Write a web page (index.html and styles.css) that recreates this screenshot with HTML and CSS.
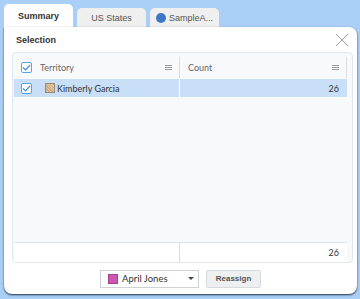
FILE: index.html
```html
<!DOCTYPE html>
<html>
<head>
<meta charset="utf-8">
<link rel="stylesheet" href="styles.css">
</head>
<body>
<div class="app">
  <div class="tabs">
    <div class="tab active">Summary</div>
    <div class="tab">US States</div>
    <div class="tab"><span class="dot"></span>SampleA...</div>
  </div>
  <div class="panel">
    <div class="head">
      <span class="title">Selection</span>
      <svg class="close" width="14" height="14" viewBox="0 0 14 14"><path d="M1 1L13 13M13 1L1 13" stroke="#9aa0a6" stroke-width="1" fill="none"/></svg>
    </div>
    <div class="grid">
      <div class="row hdr">
        <div class="cell c1">
          <span class="cb"><svg width="9" height="7" viewBox="0 0 9 7"><path d="M1 3.5L3.5 6L8 1" stroke="#3b8ee8" stroke-width="1.2" fill="none"/></svg></span>
          <span class="lbl">Territory</span>
          <span class="menu"></span>
        </div>
        <div class="cell c2"><span class="lbl">Count</span><span class="menu"></span></div>
      </div>
      <div class="row sel">
        <div class="cell c1">
          <span class="cb"><svg width="9" height="7" viewBox="0 0 9 7"><path d="M1 3.5L3.5 6L8 1" stroke="#3b8ee8" stroke-width="1.2" fill="none"/></svg></span>
          <span class="sw tan"></span>
          <span class="name">Kimberly Garcia</span>
        </div>
        <div class="cell c2 num">26</div>
      </div>
      <div class="spacer"></div>
      <div class="row foot">
        <div class="cell c1"></div>
        <div class="cell c2 num">26</div>
      </div>
    </div>
    <div class="actions">
      <div class="select"><span class="sw pink"></span><span class="opt">April Jones</span><span class="caret"></span></div>
      <div class="btn">Reassign</div>
    </div>
  </div>
</div>
</body>
</html>
```
FILE: styles.css
```css
* { box-sizing: border-box; }
html, body { margin: 0; padding: 0; }
body { width: 360px; height: 299px; overflow: hidden; background: #a9cff7; font-family: "Liberation Sans", Arial, sans-serif; }
.app { width: 360px; height: 299px; display: flex; flex-direction: column; }
.tabs { display: flex; align-items: flex-end; gap: 4px; padding: 4px 0 0 4px; height: 27px; }
.tab { width: 69px; height: 19px; background: #efefef; border-radius: 5px 5px 0 0; font-size: 9px; color: #555; display: flex; align-items: center; justify-content: center; }
.tab.active { height: 23px; background: #fff; font-weight: bold; color: #333; }
.dot { width: 10px; height: 10px; border-radius: 50%; background: #3c78c3; margin-right: 3px; }
.panel { margin-left: 4px; width: 353px; height: 267px; background: #fff; border-radius: 0 8px 8px 8px; box-shadow: 0 1px 2px rgba(20,30,50,.9); display: flex; flex-direction: column; }
.head { height: 25px; display: flex; align-items: center; justify-content: space-between; padding: 0 8px 0 12px; }
.title { font-size: 9px; font-weight: bold; color: #333; }
.grid { margin: 0 4px 0 8px; height: 211px; border: 1px solid #e3e6ea; border-radius: 4px; background: #f8f9fb; padding: 4px 5px 0 1px; display: flex; flex-direction: column; }
.row { display: flex; height: 20px; }
.cell { display: flex; align-items: center; font-family: Lato, "Open Sans", sans-serif; font-size: 9px; color: #333; }
.c1 { width: 166px; border-right: 1px solid #d9dde2; padding-left: 7px; }
.c2 { flex: 1; border-right: 1px solid #d9dde2; padding-left: 8px; }
.hdr { height: 21px; margin-bottom: 1px; }
.hdr .lbl { color: #666; flex: 1; }
.hdr .c1 .lbl { margin-left: 8px; }
.menu { width: 7px; height: 5px; border-top: 1px solid #999; border-bottom: 1px solid #999; position: relative; margin-right: 7px; }
.menu::after { content: ""; position: absolute; left: 0; right: 0; top: 1px; border-top: 1px solid #999; }
.cb { width: 11px; height: 11px; border: 1px solid #5aa0ee; border-radius: 2px; background: #fff; display: flex; align-items: center; justify-content: center; }
.sel { background: #c9dff7; height: 18px; }
.sel .c1 { border-right-color: #fff; }
.sel .c2 { border-right: none; }
.sw { width: 10px; height: 10px; border: 1px solid #9b8a74; display: inline-block; }
.sw.tan { margin-left: 13px; margin-right: 2px; background: repeating-linear-gradient(45deg, #cfa97f 0 1px, #e2c7a4 1px 2px); }
.num { justify-content: flex-end; padding-right: 8px; }
.spacer { flex: 1; }
.foot { border-top: 1px solid #dfe3e7; height: 20px; background: #fff; }
.foot .c2 { border-right: none; }
.actions { flex: 1; display: flex; align-items: center; padding-left: 96px; gap: 7px; }
.select { width: 99px; height: 18px; border: 1px solid #cfd3d8; background: #fff; display: flex; align-items: center; padding-left: 7px; font-family: Lato, "Open Sans", sans-serif; font-size: 9.5px; color: #333; }
.sw.pink { background: #cd57b0; border-color: #a3418c; margin-right: 4px; }
.opt { flex: 1; }
.caret { width: 0; height: 0; border-left: 3px solid transparent; border-right: 3px solid transparent; border-top: 3px solid #444; margin-right: 4px; }
.btn { width: 55px; height: 18px; border: 1px solid #d7dadd; border-radius: 2px; background: #eeeff1; font-size: 8px; font-weight: bold; color: #555; display: flex; align-items: center; justify-content: center; }
```
